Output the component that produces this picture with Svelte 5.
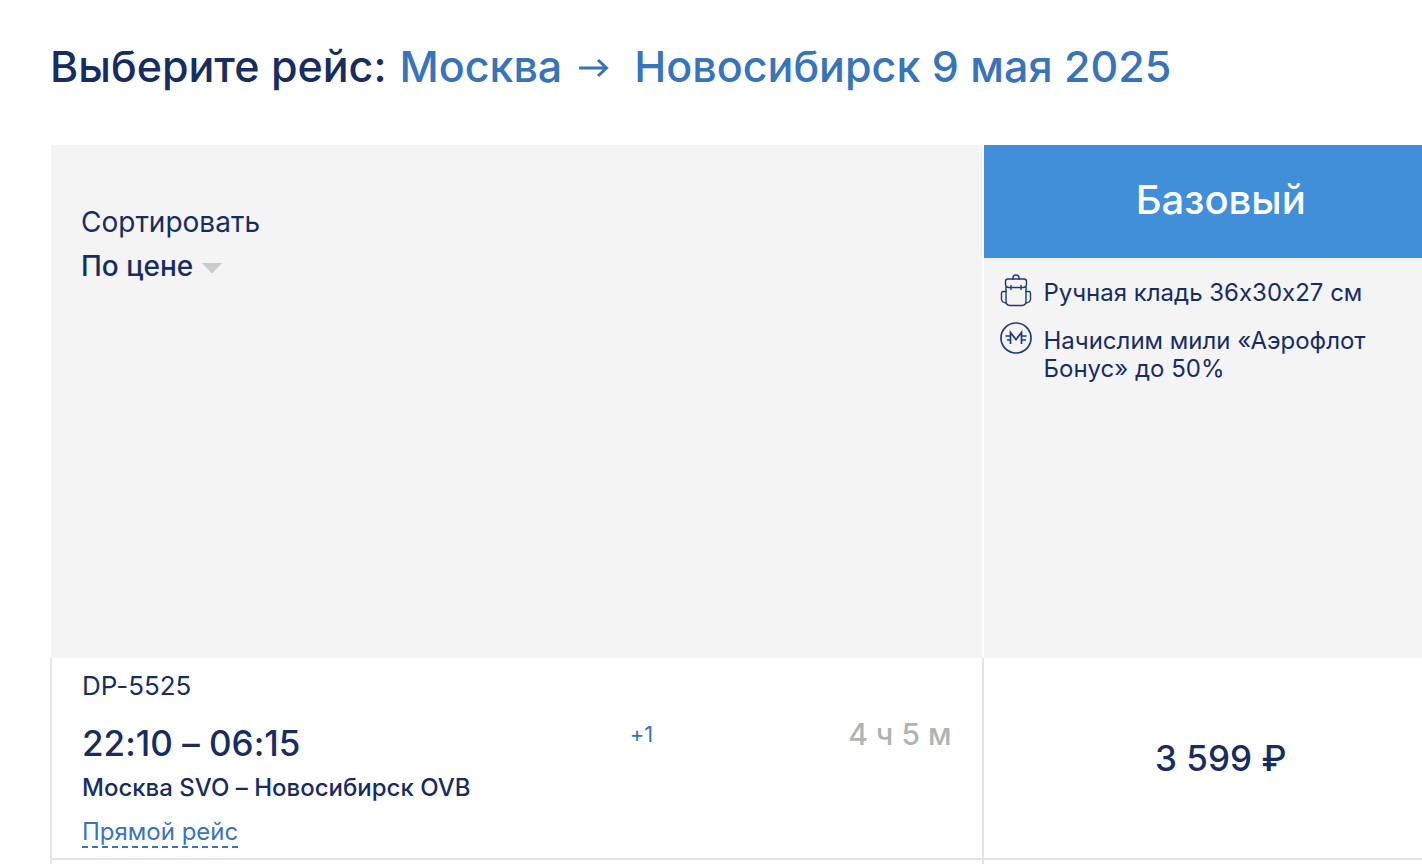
<script>
  let sort = $state('price');

  const flight = {
    number: 'DP-5525',
    time: '22:10 – 06:15',
    route: 'Москва SVO – Новосибирск OVB',
    type: 'Прямой рейс',
    shift: '+1',
    duration: '4 ч 5 м',
    price: '3 599 ₽'
  };
</script>

<main>
  <h1>
    <span class="lead">Выберите рейс:</span>
    <span class="city">Москва</span>
    <svg class="arrow" width="30" height="20" viewBox="0 0 30 20" aria-hidden="true">
      <path d="M0 10H28M19 2L27.500 10L19 18" />
    </svg>
    <span class="city">Новосибирск 9 мая 2025</span>
  </h1>

  <table>
    <colgroup>
      <col class="flight-col" />
      <col />
    </colgroup>
    <thead>
      <tr>
        <th class="sorting">
          <label for="sort">Сортировать</label>
          <div class="picker">
            <select id="sort" bind:value={sort}>
              <option value="price">По цене</option>
            </select>
            <svg width="20" height="11" viewBox="0 0 20 11" aria-hidden="true">
              <path d="M0 0H20L10 10.500Z" fill="#cbcbcb" />
            </svg>
          </div>
        </th>
        <th class="fare">
          <div class="fare-name">Базовый</div>
          <ul>
            <li>
              <svg width="32" height="34" viewBox="0 0 32 34" aria-hidden="true">
                <g fill="none" stroke="#1d3a72" stroke-width="1.4" stroke-linejoin="round" stroke-linecap="round">
                  <path d="M13 6V5A3 3 0 0 1 19 5V6" />
                  <path d="M8 6H24Q26.500 6 26.500 8.500V11Q26.500 14.500 23 14.500H9Q5.500 14.500 5.500 11V8.500Q5.500 6 8 6Z" />
                  <path d="M11 12.500V16.500M21 12.500V16.500" />
                  <path d="M6 14V28Q6 32.500 10 32.500H22Q26 32.500 26 28V14" />
                  <path d="M6 18.500H3Q1.500 18.500 1.500 20V26.500Q2 29.500 6 30M26 18.500H29Q30.500 18.500 30.500 20V26.500Q30 29.500 26 30" />
                </g>
              </svg>
              <span>Ручная кладь 36x30x27 см</span>
            </li>
            <li>
              <svg width="32" height="34" viewBox="0 0 32 34" aria-hidden="true">
                <g fill="none" stroke="#1d3a7c" stroke-width="1.7">
                  <circle cx="16" cy="17" r="15" />
                  <path d="M10.500 23V11.500L16 18.500L21.500 11.500V23" />
                  <path d="M5.500 15H10.500M7 19H10.500M21.500 15H26.500M21.500 19H26" />
                </g>
              </svg>
              <span>Начислим мили «Аэрофлот Бонус» до 50%</span>
            </li>
          </ul>
        </th>
      </tr>
    </thead>
    <tbody>
      <tr>
        <td class="flight">
          <div class="number">{flight.number}</div>
          <div class="schedule">
            <span class="time">{flight.time}</span>
            <span class="shift">{flight.shift}</span>
            <span class="duration">{flight.duration}</span>
          </div>
          <div class="route">{flight.route}</div>
          <a href="#details">{flight.type}</a>
        </td>
        <td class="price">{flight.price}</td>
      </tr>
      <tr class="next">
        <td class="flight"></td>
        <td class="price"></td>
      </tr>
    </tbody>
  </table>
</main>

<style>
  :global(body) {
    margin: 0;
    background: #fff;
  }

  main {
    overflow: hidden;
    padding: 36px 0 0 50px;
    color: #172d62;
    font-family: Inter, "Noto Sans", sans-serif;
    font-size: 24px;
    font-variant-ligatures: no-contextual;
  }

  h1 {
    display: flex;
    align-items: center;
    margin: 0 0 49px;
    font-size: 43px;
    line-height: 60px;
    font-weight: 500;
    white-space: nowrap;
  }

  .city {
    color: #3874b9;
  }

  .lead {
    margin-right: 13px;
  }

  .arrow {
    margin: 4px 25px 0 17px;
    fill: none;
    stroke: #3874b9;
    stroke-width: 3;
  }

  table {
    width: calc(100% + 36px);
    table-layout: fixed;
    border-spacing: 0;
  }

  .flight-col {
    width: 66.3%;
  }

  th,
  td {
    box-sizing: border-box;
    padding: 0;
    text-align: left;
    font-weight: 400;
    vertical-align: top;
  }

  thead th {
    height: 513px;
    background: #f4f4f4;
  }

  .sorting {
    padding: 55px 30px 0;
    border-left: 1px solid #fff;
    border-right: 2px solid #fff;
    font-size: 28px;
    line-height: 44px;
  }

  label {
    display: block;
  }

  .picker {
    display: flex;
    align-items: center;
    gap: 9px;
  }

  select {
    appearance: none;
    field-sizing: content;
    padding: 0;
    border: 0;
    background: none;
    color: inherit;
    font: inherit;
    font-weight: 500;
  }

  .picker svg {
    margin-top: 4px;
  }

  .fare-name {
    padding-bottom: 4px;
    background: #408fd8;
    color: #fff;
    font-size: 40px;
    line-height: 109px;
    font-weight: 500;
    text-align: center;
  }

  ul {
    display: grid;
    gap: 14px;
    margin: 0;
    padding: 15px 60px 0 16px;
    list-style: none;
    line-height: 28px;
  }

  li {
    display: flex;
    gap: 12px;
  }

  li svg {
    flex: none;
  }

  li span {
    padding-top: 6px;
  }

  .flight {
    padding: 8px 30px 10px;
    border: solid #e4e4e4;
    border-width: 0 2px 2px;
  }

  .price {
    border-bottom: 2px solid #e4e4e4;
    font-size: 35px;
    font-weight: 500;
    text-align: center;
    vertical-align: middle;
  }

  .number {
    font-size: 26px;
    line-height: 40px;
  }

  .schedule {
    display: grid;
    grid-template-columns: 63% 1fr auto;
    align-items: start;
    padding-top: 8px;
    line-height: 40px;
  }

  .time {
    padding-top: 8px;
    font-size: 35px;
    font-weight: 500;
    line-height: 42px;
  }

  .shift {
    color: #3874b9;
    font-size: 22px;
  }

  .duration {
    color: #b3b3b3;
    font-size: 30px;
    font-weight: 500;
    text-align: right;
  }

  .route {
    padding-top: 4px;
    line-height: 40px;
    font-weight: 500;
  }

  a {
    display: inline-block;
    margin-top: 10px;
    border-bottom: 2px dashed #3874b9;
    color: #3874b9;
    line-height: 28px;
    text-decoration: none;
  }

  .next .flight,
  .next .price {
    height: 4px;
    padding: 0;
    border-bottom: 0;
  }
</style>
